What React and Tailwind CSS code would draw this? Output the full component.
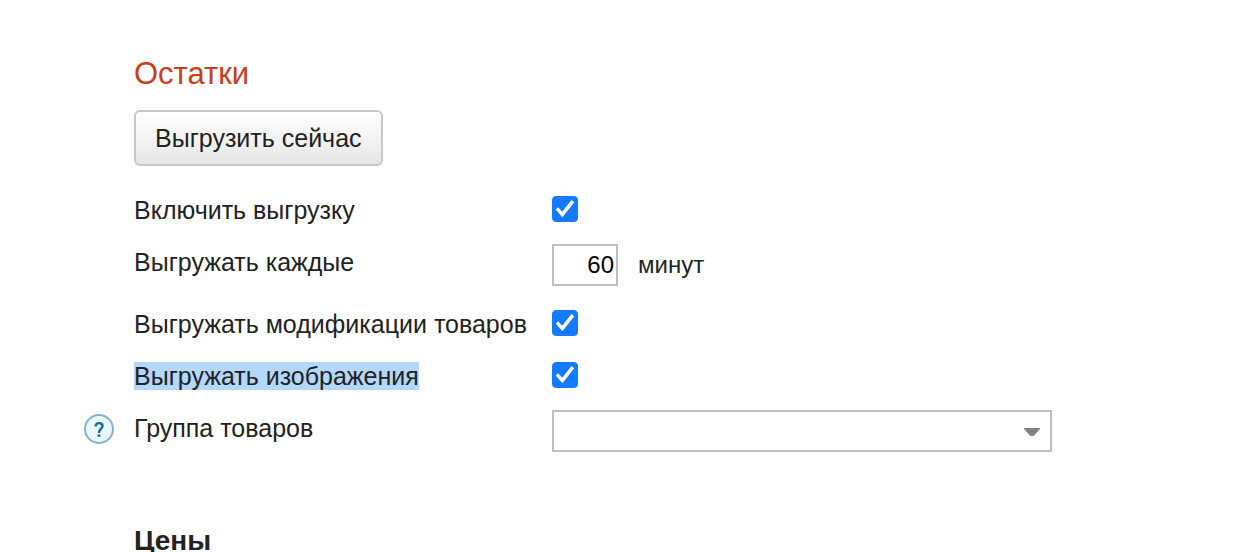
import React, { useState } from 'react';

function HelpIcon() {
  return (
    <svg viewBox="0 0 30 30" className="size-[30px]" aria-hidden="true">
      <circle cx="15" cy="15" r="14" fill="#ebf7fe" stroke="#84b1cf" strokeWidth="2" />
      <path
        d="M11.600 12.600c0-2.200 1.300-3.500 3.500-3.500 2.100 0 3.400 1.100 3.400 2.900 0 1.400-.7 2.100-1.700 3-1.100 1-1.700 1.700-1.700 3.200v.9"
        fill="none"
        stroke="#1c699c"
        strokeWidth="2.400"
      />
      <rect x="13.700" y="20.400" width="2.600" height="2.600" fill="#1c699c" />
    </svg>
  );
}

function Row({ id, label, help, selected, children }) {
  return (
    <div className="grid grid-cols-[50px_418px_minmax(0,1fr)] items-start">
      <div className="pt-3">
        {help && (
          <button type="button" aria-label="Справка" className="block">
            <HelpIcon />
          </button>
        )}
      </div>
      <div className="flex py-3">
        <label htmlFor={id} className={selected ? 'bg-[#b3d7ff]' : ''}>
          {label}
        </label>
      </div>
      {children}
    </div>
  );
}

function CheckRow({ id, label, selected }) {
  const [checked, setChecked] = useState(true);
  return (
    <Row id={id} label={label} selected={selected}>
      <div className="grid w-[26px] pt-3">
        <input
          id={id}
          type="checkbox"
          checked={checked}
          onChange={(e) => setChecked(e.target.checked)}
          className="peer col-start-1 row-start-1 size-[26px] appearance-none rounded border border-[#b0b0b0] bg-white checked:border-[#147aff] checked:bg-[#147aff]"
        />
        <svg
          viewBox="0 0 26 26"
          className="pointer-events-none invisible col-start-1 row-start-1 size-[26px] peer-checked:visible"
          aria-hidden="true"
        >
          <path
            d="M3.700 13.500L6.100 11.200L10.200 15.700L19.500 4L22.300 6.200L10.400 21.200Z"
            fill="#fff"
          />
        </svg>
      </div>
    </Row>
  );
}

export default function App() {
  return (
    <main className="h-screen overflow-hidden bg-white pr-8 pl-[84px] font-['Liberation_Sans',Arial,sans-serif] text-[25px] leading-7 text-[#222]">
      <div className="pt-14 pl-[50px]">
        <h2 className="text-[31px] leading-9 text-[#c7401c]">Остатки</h2>
        <button
          type="button"
          className="mt-[18px] h-14 rounded-md border-2 border-[#c8c8c8] bg-linear-to-b from-white to-[#e6e6e6] px-[19px]"
        >
          Выгрузить сейчас
        </button>
      </div>

      <form className="mt-[18px]">
        <CheckRow id="enabled" label="Включить выгрузку" />
        <Row id="interval" label="Выгружать каждые">
          <div className="flex items-center gap-5 pt-2 pb-3 text-2xl leading-7">
            <input
              id="interval"
              type="text"
              inputMode="numeric"
              defaultValue="60"
              className="h-[42px] w-[66px] border-2 border-[#bfbfbf] bg-white px-0.5 text-right text-black"
            />
            <span>минут</span>
          </div>
        </Row>
        <CheckRow id="variants" label="Выгружать модификации товаров" />
        <CheckRow id="images" label="Выгружать изображения" selected />
        <Row id="group" label="Группа товаров" help>
          <div className="grid max-w-[500px] items-center pt-2 pb-3">
            <select
              id="group"
              className="col-start-1 row-start-1 h-[42px] w-full appearance-none border-2 border-[#bfbfbf] bg-white pr-10 pl-2"
            >
              <option value=""></option>
            </select>
            <svg
              viewBox="0 0 16 10"
              className="pointer-events-none col-start-1 row-start-1 mr-3 h-2.5 w-4 justify-self-end"
              aria-hidden="true"
            >
              <path d="M0 2h16v1L9.500 10h-3L0 3z" fill="#808080" />
            </svg>
          </div>
        </Row>
      </form>

      <h2 className="mt-[61px] pl-[50px] text-[28px] leading-8 font-bold">Цены</h2>
    </main>
  );
}
